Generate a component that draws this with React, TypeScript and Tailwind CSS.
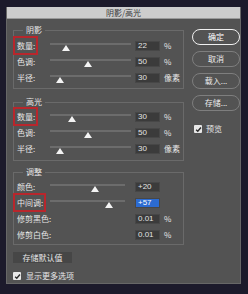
import React from 'react';

interface Row {
  label: string;
  value: string;
  unit?: string;
  thumb?: number;
  marked?: boolean;
  selected?: boolean;
}

const shadows: Row[] = [
  { label: '数量:', value: '22', unit: '%', thumb: 16, marked: true },
  { label: '色调:', value: '50', unit: '%', thumb: 38 },
  { label: '半径:', value: '30', unit: '像素', thumb: 10 },
];

const highlights: Row[] = [
  { label: '数量:', value: '30', unit: '%', thumb: 22, marked: true },
  { label: '色调:', value: '50', unit: '%', thumb: 38 },
  { label: '半径:', value: '30', unit: '像素', thumb: 10 },
];

const adjust: Row[] = [
  { label: '颜色:', value: '+20', thumb: 45 },
  { label: '中间调:', value: '+57', thumb: 59, marked: true, selected: true },
  { label: '修剪黑色:', value: '0.01', unit: '%' },
  { label: '修剪白色:', value: '0.01', unit: '%' },
];

function Check() {
  return (
    <span className="w-[8px] h-[8px] bg-[#e8e8e8] rounded-[1px] flex items-center justify-center">
      <svg width="7" height="7" viewBox="0 0 8 8">
        <path d="M1.3 4.2 L3.2 6 L6.8 1.8" fill="none" stroke="#2a2a2a" strokeWidth="1.6" />
      </svg>
    </span>
  );
}

function SliderRow({ row, track }: { row: Row; track: number }) {
  return (
    <div className="h-[16px] flex items-center">
      <div className="w-[33px] shrink-0 whitespace-nowrap">
        <span className="relative">
          {row.label}
          {row.marked && (
            <span className="absolute -left-[4px] -right-[3px] -top-[4px] -bottom-[4px] border-2 border-[#b8262c]" />
          )}
        </span>
      </div>
      <div className="w-[85px] shrink-0 h-full relative">
        {row.thumb !== undefined && (
          <>
            <div className="absolute top-[5px] left-0 h-[2px] bg-[#6c6c6c]" style={{ width: track }} />
            <svg
              className="absolute top-[7px]"
              style={{ left: row.thumb - 4 }}
              width="8"
              height="6"
              viewBox="0 0 8 6"
            >
              <path d="M4 0 L8 6 L0 6 Z" fill="#f4f4f4" />
            </svg>
          </>
        )}
      </div>
      <div
        className={`w-[25px] h-[10px] shrink-0 flex items-center pl-[2px] text-[8px] font-['Liberation_Sans',sans-serif] border border-[#474747] ${
          row.selected ? 'bg-[#2c6bd1] text-white' : 'bg-[#3b3b3b] text-[#e4e4e4]'
        }`}
      >
        {row.value}
      </div>
      {row.unit && <span className="ml-[4px]">{row.unit}</span>}
    </div>
  );
}

function Group({
  title,
  rows,
  track,
  className,
}: {
  title: string;
  rows: Row[];
  track: number;
  className: string;
}) {
  return (
    <fieldset className={`border border-[#6a6a6a] pl-[3px] ${className}`}>
      <legend className="ml-[6px] px-[3px] leading-[10px] text-[8px]">{title}</legend>
      {rows.map((r) => (
        <SliderRow key={r.label} row={r} track={track} />
      ))}
    </fieldset>
  );
}

export default function App() {
  return (
    <div className="w-[248px] h-[294px] bg-[#1c1a2b] pt-[7px] pl-[6px] font-['Noto_Sans_CJK_SC','Noto_Sans',sans-serif] text-[8px] text-[#e6e6e6]">
      <div className="w-[235px] h-[277px] bg-[#535353] border-x border-b border-[#676767] flex flex-col">
        {/* title bar */}
        <div className="h-[12px] bg-[#cdcdcd] border-b border-[#9a9a9a] flex items-center justify-center text-[#3a3a3a] text-[8px] leading-none">
          阴影/高光
        </div>

        <div className="flex pl-[6px]">
          {/* left column */}
          <div className="w-[171px] flex flex-col">
            <Group title="阴影" rows={shadows} track={81} className="mt-[6px] pt-[3px] pb-[2px]" />
            <Group title="高光" rows={highlights} track={81} className="mt-[8px] pt-[2px] pb-[3px]" />
            <Group title="调整" rows={adjust} track={75} className="mt-[6px] pt-[2px] pb-[1px]" />

            <button className="mt-[7px] w-[59px] h-[11px] bg-[#464646] text-[#e6e6e6] text-[8px] leading-none flex items-center justify-center">
              存储默认值
            </button>
            <div className="mt-[8px] h-[10px] flex items-center gap-[5px]">
              <Check />
              <span>显示更多选项</span>
            </div>
          </div>

          {/* right column */}
          <div className="ml-[8px] w-[48px] flex flex-col pt-[10px] gap-[6px]">
            <button className="h-[16px] rounded-full border-[1.5px] border-[#f0f0f0] text-[8px] text-white">确定</button>
            <button className="h-[16px] rounded-full border border-[#7e7e7e] text-[8px] text-[#ececec]">取消</button>
            <button className="h-[16px] rounded-full border border-[#7e7e7e] text-[8px] text-[#ececec]">载入...</button>
            <button className="h-[16px] rounded-full border border-[#7e7e7e] text-[8px] text-[#ececec]">存储...</button>
            <div className="mt-[7px] ml-[2px] h-[10px] flex items-center gap-[4px]">
              <Check />
              <span>预览</span>
            </div>
          </div>
        </div>
      </div>
    </div>
  );
}
